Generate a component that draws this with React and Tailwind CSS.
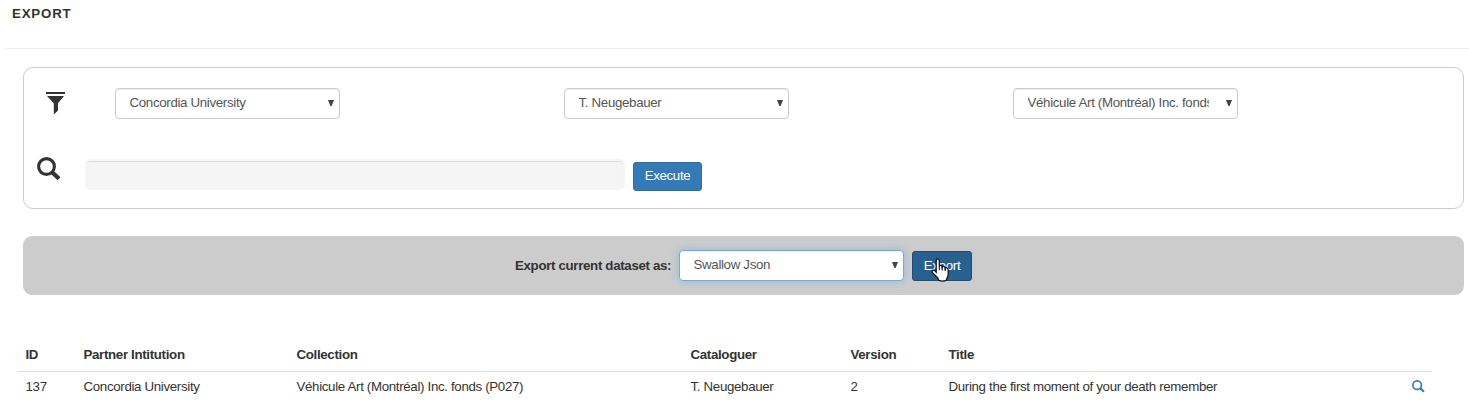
import React from "react";

function SearchIcon({ className }) {
  return (
    <svg viewBox="0 0 24 24" className={className} fill="none" stroke="currentColor">
      <circle cx="9.5" cy="9.5" r="7.9" strokeWidth="3.1" />
      <path d="M15.2 15.2L22 21.8" strokeWidth="4.2" />
    </svg>
  );
}

function FilterIcon() {
  return (
    <svg viewBox="0 0 20 23" className="h-[23px] w-5 shrink-0" fill="#333333">
      <path d="M0 0H19V2H0ZM1 4H18L12 11.2V18.5L7.8 22.6V11.2Z" />
    </svg>
  );
}

function Select({ label, focused }) {
  return (
    <div
      className={
        "flex h-[31px] w-[225px] shrink-0 items-center rounded-[4px] border bg-white pb-[2px] pl-[13.5px] pr-[5px] text-[#555555] " +
        (focused
          ? "border-[#66afe9] shadow-[inset_0_1px_1px_rgba(0,0,0,0.075),0_0_8px_rgba(102,175,233,0.6)]"
          : "border-[#cccccc] shadow-[inset_0_1px_1px_rgba(0,0,0,0.075)]")
      }
    >
      <span className="w-[181px] overflow-hidden whitespace-nowrap tracking-[-0.33px]">{label}</span>
      <svg viewBox="0 0 6 6" className="ml-auto mt-px h-[6px] w-[6px]" fill="#444444">
        <path d="M0 0H6L3.6 6H2.4Z" />
      </svg>
    </div>
  );
}

function HandCursor() {
  return (
    <svg viewBox="0 0 19 24" className="absolute left-[18px] top-[6px] h-6 w-[19px]">
      <path
        d="M5.2 2.4Q5.2 .8 6.7 .8T8.3 2.4V8.3Q8.7 7.3 9.9 7.5T11.2 9.1Q11.7 8.1 12.9 8.4T14.2 10.2Q14.8 9.4 15.9 9.9T17.2 12V16.3Q17.2 18.3 16 20.2L15.2 22.3Q11.5 23.8 7.8 22.3L6.7 19.9L1.5 14.8Q.6 13.3 1.8 12.5T4.1 13L5.2 14.1Z"
        fill="white"
        stroke="#111122"
        strokeWidth="1.3"
      />
      <path d="M8.3 8V12.2M11.2 9V12.6M14.2 10V13" stroke="#111122" strokeWidth="1.1" />
    </svg>
  );
}

const columns = "grid grid-cols-[58px_213px_394px_160px_98px_464px_27px] items-center pl-[7.5px]";

export default function App() {
  return (
    <div className="h-[403px] w-[1469px] overflow-hidden bg-white font-['Liberation_Sans',Arial,sans-serif] text-[13.3px] leading-[18px] text-[#333333]">
      <header className="ml-[5px] h-[49px] border-b border-[#eeeeee] pl-[7px] pt-[5px]">
        <h1 className="text-[13.3px] font-bold leading-[18px] tracking-[0.8px]">EXPORT</h1>
      </header>

      <main className="pt-[18px]">
        <section className="ml-[23px] h-[142px] w-[1441px] rounded-[10px] border border-[#cccccc] pt-5">
          <div className="flex items-start">
            <div className="w-[91px] pl-[22px] pt-[4px]">
              <FilterIcon />
            </div>
            <div className="flex gap-[224px]">
              <Select label="Concordia University" />
              <Select label="T. Neugebauer" />
              <Select label="Véhicule Art (Montréal) Inc. fonds (P027)" />
            </div>
          </div>
          <div className="flex items-start pl-[13px] pt-10">
            <SearchIcon className="-mt-[2px] h-6 w-6 shrink-0" />
            <div className="ml-6 h-[31px] w-[540px] rounded-[5px] border-2 border-[#f5f5f5] bg-[#f5f5f5] shadow-[inset_0_1px_1px_rgba(0,0,0,0.1)]" />
            <button className="ml-2 mt-[3px] h-[29px] w-[69px] rounded-[3px] border border-[#2e6da4] bg-[#337ab7] pb-[2px] tracking-[-0.35px] text-white">
              Execute
            </button>
          </div>
        </section>

        <section className="ml-[23px] mt-[27px] flex h-[59px] w-[1441px] items-start rounded-[9px] bg-[#cccccc] pl-[492px] pt-[14px]">
          <span className="w-[164px] whitespace-nowrap pt-[7px] font-bold tracking-[-0.33px]">
            Export current dataset as:
          </span>
          <Select label="Swallow Json" focused />
          <button className="relative ml-2 mt-px h-[30px] w-[60px] rounded-[3px] border border-[#204d74] bg-[#286090] pb-px tracking-[-0.3px] text-white">
            Export
            <HandCursor />
          </button>
        </section>

        <section className="ml-[18px] mt-[43px] w-[1414px] tracking-[-0.33px]">
          <div className={columns + " h-[34px] border-b border-[#dddddd] font-bold"}>
            <span>ID</span>
            <span>Partner Intitution</span>
            <span>Collection</span>
            <span>Cataloguer</span>
            <span>Version</span>
            <span>Title</span>
          </div>
          <div className={columns + " h-[29px]"}>
            <span>137</span>
            <span>Concordia University</span>
            <span>Véhicule Art (Montréal) Inc. fonds (P027)</span>
            <span>T. Neugebauer</span>
            <span>2</span>
            <span>During the first moment of your death remember</span>
            <SearchIcon className="-ml-[0.5px] -mt-px h-[13px] w-[13px] text-[#337ab7]" />
          </div>
        </section>
      </main>
    </div>
  );
}
